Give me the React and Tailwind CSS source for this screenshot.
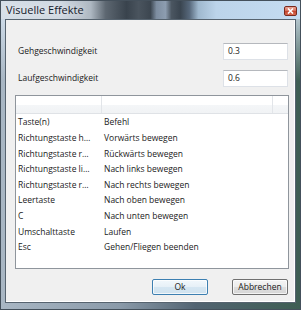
import React from "react";

const rows = [
  ["Taste(n)", "Befehl"],
  ["Richtungstaste h…", "Vorwärts bewegen"],
  ["Richtungstaste r…", "Rückwärts bewegen"],
  ["Richtungstaste li…", "Nach links bewegen"],
  ["Richtungstaste r…", "Nach rechts bewegen"],
  ["Leertaste", "Nach oben bewegen"],
  ["C", "Nach unten bewegen"],
  ["Umschalttaste", "Laufen"],
  ["Esc", "Gehen/Fliegen beenden"],
];

export default function App() {
  return (
    <div
      className="w-[301px] h-[310px] flex flex-col border border-[#44505b] px-[4px] pb-[6px] bg-[linear-gradient(to_bottom,rgba(214,227,240,1)_0px,rgba(214,227,240,0)_80px),linear-gradient(to_right,#a9b7c4_0%,#8a9aa9_40%,#526472_65%,#3e5e53_100%)] text-[#1b1b1b]"
      style={{ fontFamily: '"Open Sans", "Noto Sans", "Liberation Sans", sans-serif' }}
    >
      {/* title bar */}
      <div className="-mx-[4px] h-[18px] flex items-start bg-[linear-gradient(to_right,#d6dfe8_0%,#cfd8e1_20%,#aeb8c2_30%,#5d6771_35%,#39434d_42%,#4a545e_46%,#3c4650_50%,#7d8da0_52%,#8d9db0_55%,#4b5661_57%,#3a4550_60%,#56677a_63%,#9fb8ce_66%,#bcd4ea_72%,#c5dcf1_100%)]">
        <span className="pl-[5px] pt-[2px] text-[11px] leading-[14px] text-[#15202c] [text-shadow:0_0_6px_rgba(255,255,255,0.9)]">
          Visuelle Effekte
        </span>
        <div className="ml-auto mr-[3px] mt-[5px] w-[13px] h-[10px] rounded-[2px] border border-[#7a2a1e] bg-[linear-gradient(to_bottom,#e9a898_0%,#d9705c_45%,#c4472f_55%,#d96a50_100%)] flex items-center justify-center">
          <svg width="7" height="6" viewBox="0 0 7 6">
            <path d="M1 0.5 L6 5.5 M6 0.5 L1 5.5" stroke="#ffffff" strokeWidth="1.6" />
          </svg>
        </div>
      </div>

      {/* client */}
      <div className="flex-1 border border-[#56636f] bg-[#f0f0f0] shadow-[inset_-1px_-1px_0_#ffffff] pl-[9px] pr-[6px] pt-[23px] flex flex-col text-[8.5px]">
        <div className="h-[17px] flex items-center justify-between">
          <span className="pl-[3px]">Gehgeschwindigkeit</span>
          <div className="w-[65px] h-[17px] mr-[1px] bg-white border border-[#dde1e7] border-t-[#b5b8bd] flex items-center pl-[4px]">
            0.3
          </div>
        </div>
        <div className="mt-[10px] h-[17px] flex items-center justify-between">
          <span className="pl-[3px]">Laufgeschwindigkeit</span>
          <div className="w-[65px] h-[17px] mr-[1px] bg-white border border-[#dde1e7] border-t-[#b5b8bd] flex items-center pl-[4px]">
            0.6
          </div>
        </div>

        {/* list */}
        <div className="mt-[8px] h-[174px] bg-white border border-[#8f959c] flex flex-col">
          <div className="h-[18px] flex border-b border-[#dfe2e6] bg-[linear-gradient(to_bottom,#ffffff_0%,#ffffff_50%,#f4f6f8_51%,#f1f3f5_100%)]">
            <div className="w-[86px] border-r border-[#e2e5e9]" />
            <div className="w-[171px] border-r border-[#e2e5e9]" />
            <div className="flex-1" />
          </div>
          <div className="flex flex-col pt-[1px]">
            {rows.map(([k, v], i) => (
              <div key={i} className="h-[15.6px] flex items-center">
                <div className="w-[87px] pl-[2px] whitespace-nowrap overflow-hidden">{k}</div>
                <div className="pl-[1px] whitespace-nowrap">{v}</div>
              </div>
            ))}
          </div>
        </div>

        {/* buttons */}
        <div className="mt-[10px] flex justify-end gap-[24px] pr-[1px]">
          <div className="w-[56px] h-[16px] rounded-[2px] border border-[#3c7fb1] bg-[linear-gradient(to_bottom,#f2f8fc_0%,#e6f0f7_50%,#d5e6f2_51%,#cfe2ef_100%)] shadow-[inset_0_0_0_1px_rgba(255,255,255,0.7)] flex items-center justify-center">
            Ok
          </div>
          <div className="w-[56px] h-[16px] rounded-[2px] border border-[#707070] bg-[linear-gradient(to_bottom,#f4f4f4_0%,#ececec_50%,#dedede_51%,#d6d6d6_100%)] shadow-[inset_0_0_0_1px_rgba(255,255,255,0.7)] flex items-center justify-center">
            Abbrechen
          </div>
        </div>
      </div>
    </div>
  );
}
